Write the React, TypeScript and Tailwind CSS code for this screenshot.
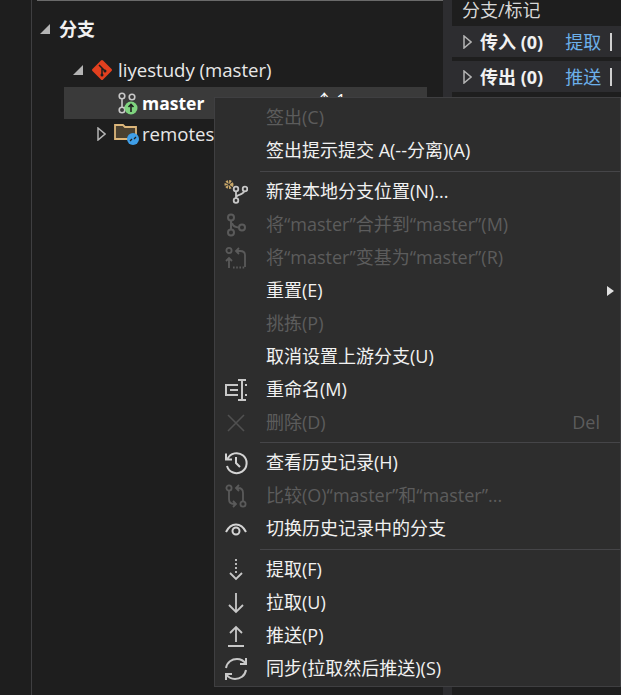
import React from "react";

const font = "font-['Open_Sans','Noto_Sans_CJK_SC',sans-serif]";

function Tri({ open, className }: { open?: boolean; className?: string }) {
  if (open) {
    return (
      <svg width="10" height="10" viewBox="0 0 10 10" className={className}>
        <path d="M10 0V10H0Z" fill="#b4b4b4" />
      </svg>
    );
  }
  return (
    <svg width="9" height="14" viewBox="0 0 9 14" className={className}>
      <path d="M1 1L8 7L1 13Z" fill="none" stroke="#b4b4b4" strokeWidth="1.5" />
    </svg>
  );
}

const icons: Record<string, React.ReactNode> = {
  new: (
    <svg width="24" height="24" viewBox="0 0 24 24" fill="none">
      <circle cx="5" cy="4.5" r="2.8" stroke="#c9a86a" strokeWidth="3.4" strokeDasharray="1.7 0.9" />
      <g stroke="#c8c8c8" strokeWidth="1.8">
        <circle cx="12" cy="9" r="2.3" />
        <circle cx="21" cy="9" r="2.3" />
        <circle cx="12" cy="20.5" r="2.3" />
        <path d="M12 11.5V18M20 11.5C19 15 14 14 12.5 16.5" />
      </g>
    </svg>
  ),
  merge: (
    <svg width="24" height="24" viewBox="0 0 24 24" fill="none" stroke="#5a5a5a" strokeWidth="2">
      <circle cx="7" cy="4.5" r="3" />
      <circle cx="7" cy="19.5" r="3" />
      <circle cx="18" cy="14.5" r="3" />
      <path d="M7 7.5V16.5M8 10C9 13 12 14.5 15 14.5" />
    </svg>
  ),
  rebase: (
    <svg width="24" height="24" viewBox="0 0 24 24" fill="none" stroke="#5a5a5a" strokeWidth="1.8">
      <circle cx="5" cy="4.5" r="2.6" />
      <path d="M5 22V12M2 15L5 12L8 15" />
      <path d="M9 21.5H21" strokeDasharray="1.6 1.6" />
      <path d="M21 21V9C21 6 19 5 16 5H12M15 2L12 5L15 8" />
    </svg>
  ),
  rename: (
    <svg width="24" height="24" viewBox="0 0 24 24" fill="none" stroke="#c8c8c8" strokeWidth="2">
      <path d="M14 7H2V17H14M6 12H14" />
      <path d="M14 2H22M14 22H22M18 2V22" />
      <path d="M21 7H23M21 17H23" />
    </svg>
  ),
  del: (
    <svg width="20" height="20" viewBox="0 0 20 20" stroke="#505050" strokeWidth="1.6">
      <path d="M2 2L18 18M18 2L2 18" />
    </svg>
  ),
  history: (
    <svg width="24" height="24" viewBox="0 0 24 24" fill="none" stroke="#d4d4d4" strokeWidth="2">
      <path d="M3.5 8A10 10 0 1 1 3 15" />
      <path d="M2 2.5V8.5H8" />
      <path d="M12 6V12L16 16" />
    </svg>
  ),
  compare: (
    <svg width="24" height="24" viewBox="0 0 24 24" fill="none" stroke="#5a5a5a" strokeWidth="1.8">
      <circle cx="5" cy="4" r="2.6" />
      <circle cx="19" cy="20" r="2.6" />
      <path d="M5 7V15C5 18 7 20 10 20H12M9 17L12 20L9 23" />
      <path d="M19 17V9C19 6 17 4 14 4H12M15 1L12 4L15 7" />
    </svg>
  ),
  eye: (
    <svg width="24" height="24" viewBox="0 0 24 24" fill="none" stroke="#d4d4d4" strokeWidth="2">
      <path d="M2 15C7 5 17 5 22 15" />
      <circle cx="12" cy="14" r="3.5" />
    </svg>
  ),
  fetch: (
    <svg width="24" height="24" viewBox="0 0 24 24" fill="none" stroke="#c8c8c8" strokeWidth="1.8">
      <path d="M12 1V17" strokeDasharray="2 2" />
      <path d="M6 15L12 21L18 15" />
    </svg>
  ),
  pull: (
    <svg width="24" height="24" viewBox="0 0 24 24" fill="none" stroke="#c8c8c8" strokeWidth="1.8">
      <path d="M12 2V21M5 14L12 21L19 14" />
    </svg>
  ),
  push: (
    <svg width="24" height="24" viewBox="0 0 24 24" fill="none" stroke="#c8c8c8" strokeWidth="1.8">
      <path d="M12 3V18M6 9L12 3L18 9M4 22H20" />
    </svg>
  ),
  sync: (
    <svg width="24" height="24" viewBox="0 0 24 24" fill="none" stroke="#c8c8c8" strokeWidth="2">
      <path d="M2 11C3 5 8 2 13 2C17 2 20 4 22 7M22 1V7H16" />
      <path d="M22 13C21 19 16 22 11 22C7 22 4 20 2 17M2 23V17H8" />
    </svg>
  ),
};

type Item = { label: string; icon?: string; off?: boolean; arrow?: boolean; key2?: string; sep?: number };

const items: Item[] = [
  { label: "签出(C)", off: true },
  { label: "签出提示提交 A(--分离)(A)" },
  { sep: 8, label: "" },
  { label: "新建本地分支位置(N)...", icon: "new" },
  { label: "将“master”合并到“master”(M)", icon: "merge", off: true },
  { label: "将“master”变基为“master”(R)", icon: "rebase", off: true },
  { label: "重置(E)", arrow: true },
  { label: "挑拣(P)", off: true },
  { label: "取消设置上游分支(U)" },
  { label: "重命名(M)", icon: "rename" },
  { label: "删除(D)", icon: "del", off: true, key2: "Del" },
  { sep: 7, label: "" },
  { label: "查看历史记录(H)", icon: "history" },
  { label: "比较(O)“master”和“master”...", icon: "compare", off: true },
  { label: "切换历史记录中的分支", icon: "eye" },
  { sep: 8, label: "" },
  { label: "提取(F)", icon: "fetch" },
  { label: "拉取(U)", icon: "pull" },
  { label: "推送(P)", icon: "push" },
  { label: "同步(拉取然后推送)(S)", icon: "sync" },
];

function Menu() {
  return (
    <div className="absolute left-[214px] top-[97px] w-[407px] h-[590px] bg-[#2d2d2d] border border-[#3f3f41] pt-[3px]">
      {items.map((it, i) =>
        it.sep ? (
          <div key={i} className={`${it.sep === 7 ? "h-[7px]" : "h-[8px]"} ml-[45px] flex items-center`}>
            <div className="w-full h-px bg-[#454548]" />
          </div>
        ) : (
          <div key={i} className="flex items-center h-[33px]">
            <div className="w-[41px] mr-[10px] shrink-0 flex justify-center">{it.icon && icons[it.icon]}</div>
            <span className={`text-[18px] whitespace-pre ${it.off ? "text-[#5c5c5c]" : "text-[#f1f1f1]"}`}>{it.label}</span>
            {it.key2 && <span className="ml-auto mr-[20px] text-[18px] text-[#5c5c5c]">{it.key2}</span>}
            {it.arrow && (
              <svg width="7" height="10" viewBox="0 0 7 10" className="ml-auto mr-[6px]">
                <path d="M0 0L7 5L0 10Z" fill="#e0e0e0" />
              </svg>
            )}
          </div>
        )
      )}
    </div>
  );
}

function SidePanel({ title, link }: { title: string; link: string }) {
  return (
    <div className="h-[31px] bg-[#2d2d30] flex items-center pl-[11px] text-[#f1f1f1]">
      <Tri className="mr-[8px]" />
      <span className="text-[18px] font-bold pt-[1px]">{title}</span>
      <span className="ml-[22px] text-[18px] text-[#6cb0ea] pt-[1px]">{link}</span>
      <div className="ml-[9px] w-[2px] h-[18px] bg-[#d0d0d0]" />
    </div>
  );
}

export default function App() {
  return (
    <div className={`relative w-[621px] h-[695px] overflow-hidden bg-[#1e1e1e] flex ${font}`}>
      <div className="w-[32px] shrink-0 border-r border-[#3f3f41]" />
      <div className="w-[411px] shrink-0 pl-[5px]">
        <div className="h-px bg-[#6a6a6a]" />
        <div className="h-[56px] flex items-center pl-[3px] text-[#f1f1f1]">
          <Tri open className="mr-[9px]" />
          <span className="text-[18px] font-bold">分支</span>
        </div>
        <div className="h-[26px] flex items-center pl-[36px] text-[#e8e8e8]">
          <Tri open className="mr-[7px]" />
          <svg width="24" height="24" viewBox="0 0 24 24" className="mr-[4px]">
            <rect x="4.5" y="4.5" width="15" height="15" transform="rotate(45 12 12)" fill="#e2401f" rx="1.5" />
            <path d="M9 7L15 13M12 10V17" stroke="#1e1e1e" strokeWidth="1.5" />
            <circle cx="12" cy="17" r="1.5" fill="#1e1e1e" />
            <circle cx="15" cy="13" r="1.5" fill="#1e1e1e" />
          </svg>
          <span className="text-[18.6px]">liyestudy (master)</span>
        </div>
        <div className="mt-[4px] ml-[27px] mr-[16px] h-[32px] bg-[#3a3a3a] flex items-center pl-[54px] text-white">
          <div className="w-[20px] h-[24px] mr-[4px] shrink-0">
            <svg width="20" height="24" viewBox="0 0 20 24" fill="none" stroke="#c8c8c8" strokeWidth="1.6">
              <circle cx="4" cy="5" r="2.8" />
              <circle cx="14" cy="6" r="2.8" />
              <circle cx="4" cy="19" r="2.8" />
              <path d="M4 8V16M6 17C9 16 9 14 10 13" />
              <circle cx="13" cy="17" r="6.5" fill="#7fd37f" stroke="none" />
              <path d="M13 21V14M10.5 16L13 13.5L15.5 16" stroke="#1e1e1e" />
            </svg>
          </div>
          <span className="text-[17.5px] font-bold">master</span>
          <span className="ml-[112px] mb-[6px] text-[16px]">↑ 1</span>
        </div>
        <div className="h-[30px] flex items-center pl-[60px] text-[#e8e8e8]">
          <Tri className="mr-[8px]" />
          <svg width="26" height="24" viewBox="0 0 26 24" className="mr-[2px]">
            <path d="M1 3H9L11 5H22V17H1Z" fill="#4a4030" stroke="#dcb67a" strokeWidth="1.8" />
            <circle cx="19" cy="17" r="6" fill="#3f9fe8" />
            <path d="M16 19L18 17M20 17L22 15" stroke="#1e1e1e" strokeWidth="1.3" />
          </svg>
          <span className="text-[18.6px]">remotes/origin</span>
        </div>
      </div>
      <div className="w-[9px] shrink-0 bg-[#2d2d30]" />
      <div className="flex-1 text-[#d8d8d8]">
        <div className="h-[26px] pl-[10px] text-[18px] leading-[20px]">分支/标记</div>
        <SidePanel title="传入 (0)" link="提取" />
        <div className="h-[4px]" />
        <SidePanel title="传出 (0)" link="推送" />
      </div>
      <Menu />
    </div>
  );
}
